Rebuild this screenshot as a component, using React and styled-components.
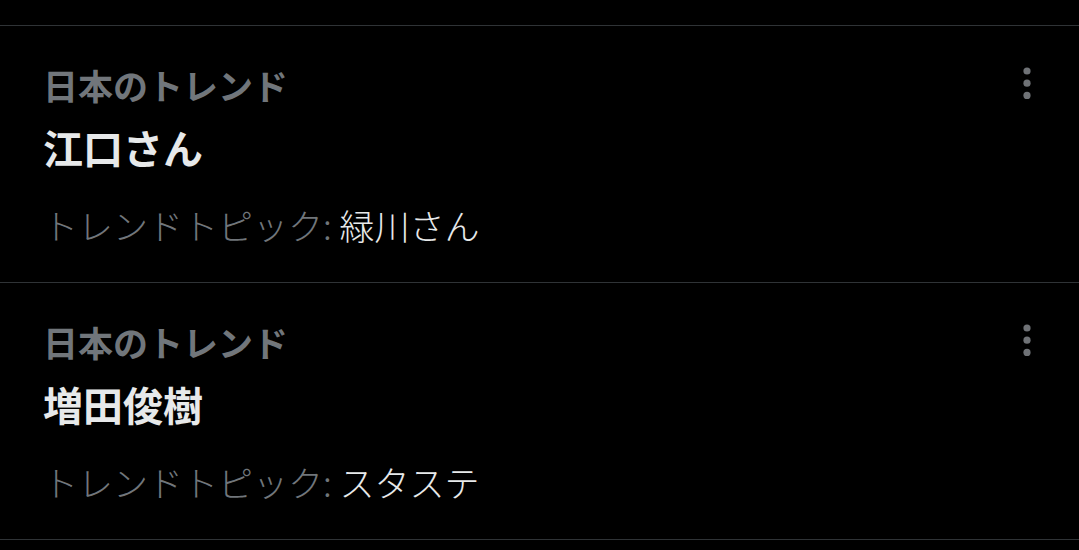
import React from "react";
import styled, { createGlobalStyle } from "styled-components";

const Global = createGlobalStyle`
  html, body { margin: 0; padding: 0; background: #000; }
  body { font-family: "Noto Sans CJK JP", "Noto Sans", sans-serif; }
`;

const Page = styled.div`
  width: 1079px;
  height: 550px;
  background: #000;
  overflow: hidden;
`;

const TopEdge = styled.div`
  height: 25px;
  border-bottom: 1px solid #2f3336;
`;

const Row = styled.div`
  display: flex;
  justify-content: space-between;
  align-items: flex-start;
  height: 257px;
  box-sizing: border-box;
  padding: 38px 36px 0 43px;
  border-bottom: 1px solid #2f3336;
`;

const Content = styled.div`
  display: flex;
  flex-direction: column;
`;

const Label = styled.div`
  color: #71767b;
  font-size: 35px;
  font-weight: 700;
  line-height: 42px;
`;

const Title = styled.div`
  color: #e7e9ea;
  font-size: 40px;
  font-weight: 700;
  line-height: 48px;
  margin-top: 17px;
`;

const Sub = styled.div`
  color: #71767b;
  font-size: 35px;
  font-weight: 300;
  line-height: 44px;
  margin-top: 32px;
`;

const Topic = styled.span`
  color: #e7e9ea;
`;

const More = styled.div`
  width: 32px;
  height: 40px;
  display: flex;
  align-items: center;
  justify-content: center;
  margin-top: 0px;
`;

const Dots = () => (
  <svg width="8" height="34" viewBox="0 0 8 34">
    <circle cx="4" cy="4" r="3.6" fill="#6f7276" />
    <circle cx="4" cy="16.2" r="3.6" fill="#6f7276" />
    <circle cx="4" cy="28.4" r="3.6" fill="#6f7276" />
  </svg>
);

const trends = [
  { title: "江口さん", topic: "緑川さん" },
  { title: "増田俊樹", topic: "スタステ" },
];

export default function App() {
  return (
    <Page>
      <Global />
      <TopEdge />
      {trends.map((t) => (
        <Row key={t.title}>
          <Content>
            <Label>日本のトレンド</Label>
            <Title>{t.title}</Title>
            <Sub>
              トレンドトピック: <Topic>{t.topic}</Topic>
            </Sub>
          </Content>
          <More>
            <Dots />
          </More>
        </Row>
      ))}
    </Page>
  );
}
